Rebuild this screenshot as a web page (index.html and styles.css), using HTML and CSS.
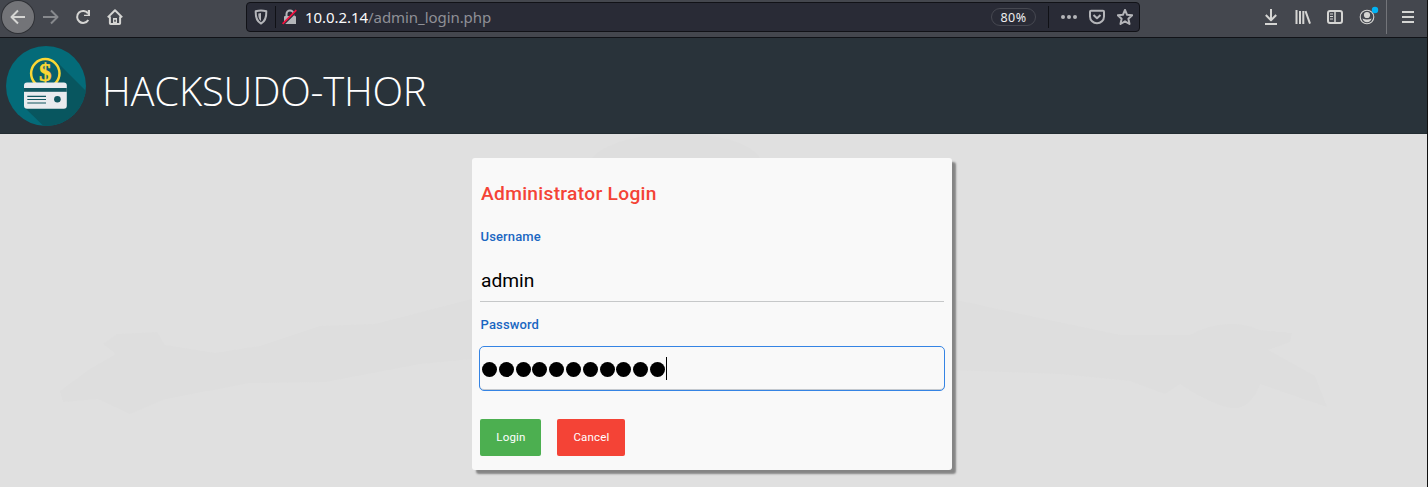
FILE: index.html
```html
<!DOCTYPE html>
<html lang="en">
<head>
<meta charset="utf-8">
<title>HACKSUDO-THOR</title>
<link rel="stylesheet" href="styles.css">
</head>
<body>
<div class="window">
  <nav class="toolbar">
    <div class="nav-buttons">
      <span class="back"><svg width="16" height="16" viewBox="0 0 16 16"><path d="M15 8H2M8 1.5L1.5 8L8 14.5" class="line"/></svg></span>
      <svg class="dim" width="16" height="16" viewBox="0 0 16 16"><path d="M0 8H14M8 1.5L14.5 8L8 14.5" class="line"/></svg>
      <svg width="16" height="16" viewBox="0 0 16 16"><path d="M13 4.4A6 6 0 1 0 13.3 11" class="line"/><path d="M15 1V7H9V5.8H12.8V1Z" class="fill"/></svg>
      <svg width="16" height="16" viewBox="0 0 16 16"><path d="M.8 8.4L8 1.2L15.2 8.4M2.9 7.5V14.2Q2.9 15 3.7 15H12.3Q13.1 15 13.1 14.2V7.5" class="line"/><path d="M6 9H10V15H6Z" class="fill"/><path d="M8 10.8V12.7" class="cut"/></svg>
    </div>
    <div class="address">
      <svg class="shield" width="14" height="16" viewBox="0 0 14 16"><path d="M7 1.4C4.8 1.4 3.2 1.8 1.7 2.3C1.5 8 2.2 12.2 7 14.5C11.8 12.2 12.5 8 12.3 2.3C10.8 1.8 9.2 1.4 7 1.4Z" class="line"/><path d="M7 4V12C4.8 10.6 4.2 8 4.3 4.5Q5.5 4 7 4Z" class="fill"/></svg>
      <i class="rule"></i>
      <svg class="lock" width="16" height="16" viewBox="0 0 16 16"><path d="M4.5 8V5A3.5 3.5 0 0 1 11.5 5V8" class="line"/><path d="M3 7H13Q14 7 14 8V15H2V8Q2 7 3 7Z" class="fill"/><path d="M1 15.8L14.8 2" class="gap"/><path d="M.6 14.8L14.3 1.1" class="strike"/></svg>
      <span class="url"><b>10.0.2.14</b>/admin_login.php</span>
      <span class="zoom">80%</span>
      <i class="rule"></i>
      <svg class="dots" width="16" height="16" viewBox="0 0 16 16"><circle cx="2" cy="8" r="2"/><circle cx="8" cy="8" r="2"/><circle cx="14" cy="8" r="2"/></svg>
      <svg class="pocket" width="16" height="16" viewBox="0 0 16 16"><path d="M2 1.7H14Q15 1.7 15 2.7V7.5A7 6.8 0 0 1 1 7.5V2.7Q1 1.7 2 1.7Z" class="line"/><path d="M4.5 6L8 9.3L11.5 6" class="line"/></svg>
      <svg class="star" width="16" height="16" viewBox="0 0 16 16"><path d="M8 1L10.1 5.8L15.2 6.3L11.4 9.8L12.5 15L8 12.3L3.5 15L4.6 9.8L.8 6.3L5.9 5.8Z" class="line"/></svg>
    </div>
    <div class="tools">
      <svg width="16" height="16" viewBox="0 0 16 16"><path d="M8 0V11M2.8 6L8 11.2L13.2 6M2 15H14" class="line"/></svg>
      <svg width="16" height="16" viewBox="0 0 16 16"><path d="M1.5 1V15M5 2V15M8.3 2V15M10.5 2.2L15 14.7" class="line"/></svg>
      <svg width="16" height="16" viewBox="0 0 16 16"><rect x="1" y="2" width="14" height="12" rx="2" class="line"/><path d="M8 2V14" class="thin2"/><path d="M3 5H6M3 7.5H6M3 10H6" class="thin"/></svg>
      <svg class="account" width="22" height="22" viewBox="0 0 22 22"><circle cx="10" cy="12" r="6.8" class="thin"/><circle cx="10" cy="10" r="3.1" class="fill"/><path d="M5.4 13.5Q10 15.5 14.6 13.5Q13.5 17.2 10 17.2Q6.5 17.2 5.4 13.5Z" class="fill"/><circle cx="18" cy="5" r="3.2" fill="#00b3f4"/></svg>
      <i class="divider"></i>
      <svg class="menu" width="12" height="14" viewBox="0 0 12 14"><path d="M0 2H12M0 7H12M0 12H12" class="line"/></svg>
    </div>
  </nav>

  <header class="banner">
    <svg class="logo" width="80" height="80" viewBox="0 0 80 80">
      <defs><clipPath id="disc"><circle cx="40" cy="40" r="40"/></clipPath></defs>
      <g clip-path="url(#disc)">
        <rect width="80" height="80" fill="#046b79"/>
        <path d="M51 16L90 55V90H48L19 62Z" fill="#08565f"/>
      </g>
      <circle cx="39.3" cy="27.3" r="14.2" fill="#08606d" stroke="#fad735" stroke-width="2.5"/>
      <text x="39.3" y="35.3" class="coin">$</text>
      <rect x="18" y="36.5" width="42.8" height="26.2" rx="3" fill="#e9ebee"/>
      <rect x="18" y="42" width="42.8" height="3.8" fill="#12565f"/>
      <path d="M21.3 50.3H40M21.3 53.5H40M21.3 57H40" stroke="#12565f" stroke-width="1.2"/>
      <circle cx="51.4" cy="53.3" r="3.3" fill="#12565f"/>
    </svg>
    <h1>HACKSUDO-THOR</h1>
  </header>

  <main class="page">
    <svg class="backdrop" width="1427" height="353" viewBox="0 0 1427 353">
      <path d="M60 257L90 235L116 220L103 210L117 200L157 198L165 211L215 219L260 212L320 192L375 190L472 165V225L420 230L325 248L250 249L165 265L130 280L98 265L63 268Z"/>
      <path d="M952 165L1030 182L1120 201L1190 201Q1225 182 1260 196L1292 199L1290 208L1268 216L1315 242L1327 273L1260 250Q1253 270 1238 274Q1220 276 1180 250L1165 260L1130 247L1060 240L952 236Z"/>
      <path d="M592 24Q615 0 680 0Q742 0 760 24Z"/>
    </svg>
    <form class="card">
      <h2>Administrator Login</h2>
      <label>Username</label>
      <div class="field">admin</div>
      <label>Password</label>
      <div class="field focused"><i></i><i></i><i></i><i></i><i></i><i></i><i></i><i></i><i></i><i></i><i></i><span class="caret"></span></div>
      <div class="actions">
        <button type="button" class="login">Login</button>
        <button type="button" class="cancel">Cancel</button>
      </div>
    </form>
  </main>
</div>
</body>
</html>
```
FILE: styles.css
```css
* { box-sizing: border-box; }
body { margin: 0; background: #111; font-family: Roboto, sans-serif; overflow: hidden; }
.window { width: 1427px; height: 487px; display: flex; flex-direction: column; }
svg { display: block; flex: none; }
.line, .thin, .thin2 { fill: none; stroke: currentColor; stroke-width: 2; stroke-linejoin: round; }
.thin { stroke-width: 1.1; }
.thin2 { stroke-width: 1.5; }
.fill { fill: currentColor; }
.cut { stroke: #45474d; stroke-width: 1.5; }

.toolbar { height: 38px; flex: none; display: flex; padding-bottom: 4px; background: #44474e; border-bottom: 1px solid #111318; color: #d5d5d3; }
.nav-buttons { width: 246px; flex: none; display: flex; align-items: center; gap: 16px; padding-left: 2px; }
.back { width: 32px; height: 32px; display: grid; place-items: center; border-radius: 50%; background: #737478; box-shadow: 0 0 0 1px #2f3136; margin-right: -7px; }
.dim { color: #87898d; }
.address { width: 894px; flex: none; height: 30px; margin-top: 2px; display: flex; align-items: center; background: #292b36; border: 1px solid #111217; border-radius: 4px; color: #b4b5b9; }
.shield { margin-left: 7px; margin-right: 7px; }
.rule { width: 1px; height: 22px; background: #101116; }
.lock { margin-left: 6px; }
.gap { stroke: #292b36; stroke-width: 2; }
.strike { stroke: #f5123f; stroke-width: 1.7; }
.url { flex: 1; margin-left: 7px; font: 15px/20px "Noto Sans", sans-serif; color: #8f9096; letter-spacing: -.06px; }
.url b { font-weight: 400; color: #f9f9fa; }
.zoom { width: 45px; height: 18px; margin-right: 12px; border: 1px solid #464851; border-radius: 9px; font: 12.5px/17px "Noto Sans", sans-serif; letter-spacing: .4px; color: #eeeef0; text-align: center; }
.dots { margin-left: 12px; fill: currentColor; }
.pocket { margin-left: 12px; }
.star { margin-left: 12px; margin-right: 6px; }
.tools { margin-left: 123px; display: flex; align-items: center; gap: 16px; }
.account { margin: -2px -9px 0 -2px; }
.divider { width: 1px; height: 34px; background: #73757a; }
.menu { margin-left: -1px; }

.banner { height: 96px; flex: none; display: flex; padding: 8px 6px; background: #29333a; border-bottom: 1px solid #222c31; }
.coin { font: 700 25px "Liberation Serif", serif; fill: #fad735; stroke: #fad735; stroke-width: .4px; text-anchor: middle; }
.banner h1 { margin: 18px 0 0 16px; font: 300 40px/54px "Open Sans", sans-serif; letter-spacing: -.22px; color: #fff; }

.page { flex: 1; min-height: 0; position: relative; padding: 24px 0 0 472px; background: #e0e0e0; }
.backdrop { position: absolute; left: 0; top: 0; fill: #dedede; }
.card { position: relative; width: 480px; height: 312px; padding: 24px 8px 0; background: #f9f9f9; border-radius: 3px; box-shadow: 4px 4px 2px #858585; }
.card h2 { margin: 0 0 22px; padding-left: 1px; font-size: 19.2px; line-height: 24px; font-weight: 500; letter-spacing: .3px; color: #f44336; }
label { display: block; padding-left: .6px; font-size: 13px; line-height: 18px; font-weight: 500; color: #1b67c2; letter-spacing: .12px; }
.field { height: 42px; margin: 14px 0; padding: 3px 1px 0; border-bottom: 1px solid #c6c8c9; font-size: 19.2px; line-height: 36px; color: #000; }
.focused { height: 45px; margin: 12px -1px 28px; padding: 0 2px; display: flex; align-items: center; gap: 1.8px; border: 1px solid #3584e4; border-radius: 5px; box-shadow: inset 0 -1px #c5c9ce; }
.focused i { width: 15px; height: 15px; border-radius: 50%; background: #000; position: relative; top: 1px; }
.caret { width: 1px; height: 23px; background: #000; margin-left: -1px; }
.actions { display: flex; gap: 16px; }
.actions button { height: 37px; padding: 0 0 0 1px; border: 0; border-radius: 2px; font: 11.5px/37px Roboto, sans-serif; letter-spacing: .2px; color: #fff; }
.actions .login { width: 61px; background: #4caf50; }
.actions .cancel { width: 68px; background: #f44336; }
```
